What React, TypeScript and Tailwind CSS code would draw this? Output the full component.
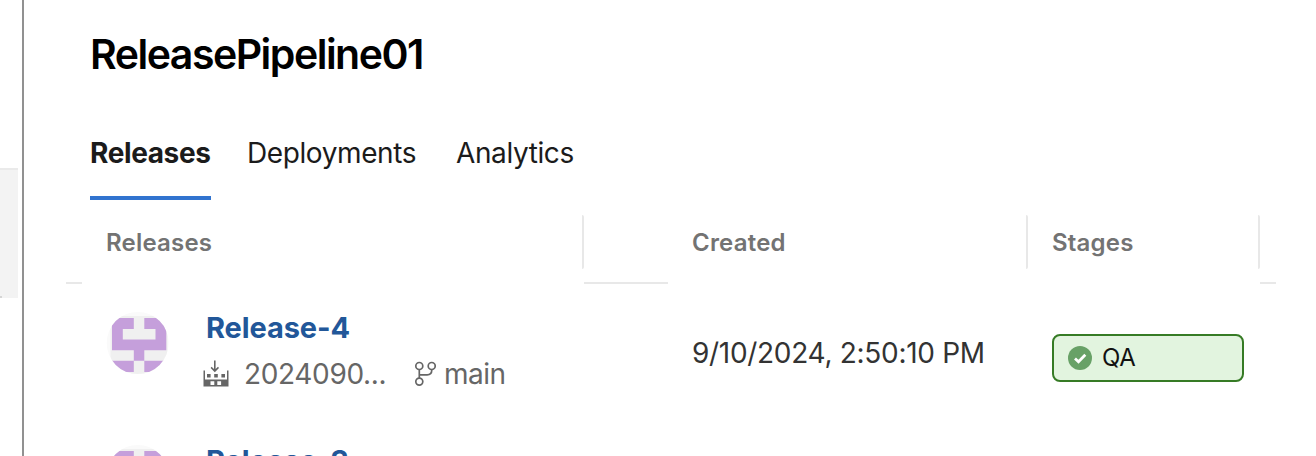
import type { ReactNode } from "react";

function Avatar() {
  return (
    <svg width="64" height="64" viewBox="0 0 64 64" className="block shrink-0">
      <defs>
        <clipPath id="avatar-clip">
          <circle cx="31.7" cy="32" r="31" />
        </clipPath>
      </defs>
      <g clipPath="url(#avatar-clip)">
        <rect width="64" height="64" fill="#fafafa" />
        <rect x="4.5" y="5" width="57" height="59" fill="#f0f0f0" />
        <path
          fill="#c59fdb"
          d="M6 7H27.8V18H16.8V28.5H49.5V18H38.3V7H60.3V39.2H38.3V49.8H27.8V39.2H6ZM6 49.8H27.8V61H6ZM38.3 49.8H60.3V61H38.3Z"
        />
      </g>
    </svg>
  );
}

function BuildIcon() {
  return (
    <svg width="26" height="28" viewBox="0 0 26 28" className="block shrink-0" fill="#666">
      <path d="M11 0.5H12.6V9L15 6.8L16 7.9L11.8 12.2L7.6 7.9L8.6 6.8L11 9Z" />
      <path
        fillRule="evenodd"
        d="M0.5 10.5H2V19.5H24V10.5H25.5V26.5H0.5ZM7.5 21.3V25H11.3V21.3ZM14.3 21.3V25H18.1V21.3Z"
      />
      <path d="M4 14H7.6V17.5H4ZM11.2 14H14.8V17.5H11.2ZM18.4 14H22V17.5H18.4Z" />
    </svg>
  );
}

function BranchIcon() {
  return (
    <svg width="22" height="26" viewBox="0 0 22 26" className="block shrink-0" fill="none" stroke="#666" strokeWidth="1.7">
      <circle cx="5.3" cy="5" r="3.5" />
      <circle cx="17.7" cy="5" r="3.5" />
      <circle cx="5.3" cy="20.6" r="3.5" />
      <path d="M5.3 8.5V17.1M17.7 8.5V9.5Q17.7 13.8 13.2 13.8H5.3" />
    </svg>
  );
}

function Row({ name, build, branch, children }: { name: string; build?: string; branch?: string; children?: ReactNode }) {
  return (
    <div className="flex h-[133px] shrink-0 items-start">
      <div className="flex w-[602px] pl-[16px]">
        <Avatar />
        <div className="ml-[36px] flex flex-col">
          <div className="h-[34px] whitespace-nowrap text-[29px] font-bold leading-[34px] tracking-[-0.1px] text-[#225799]">{name}</div>
          {build && (
            <div className="-ml-[3px] mt-[11px] flex h-[36px] items-center text-[28px] leading-[36px] text-[#666]">
              <BuildIcon />
              <span className="ml-[15px] w-[170px] whitespace-nowrap tracking-[-0.35px]">{build}</span>
              <BranchIcon />
              <span className="ml-[8px] tracking-[-0.5px]">{branch}</span>
            </div>
          )}
        </div>
      </div>
      {children}
    </div>
  );
}

export default function App() {
  return (
    <div className="flex h-[456px] w-[1316px] overflow-hidden bg-white font-['Inter','Liberation_Sans',sans-serif]">
      <aside className="w-[22px] shrink-0 pt-[168px]">
        <div className="flex h-[130px] w-[18px] items-end border-t-2 border-[#eaeaea] bg-[#f3f3f3]">
          <div className="h-[2px] w-[2px] bg-[#d5d5d5]" />
        </div>
      </aside>
      <main className="flex min-w-0 flex-1 flex-col border-l-2 border-[#919191]">
        <h1 className="ml-[66px] mt-[29px] h-[50px] shrink-0 text-[41px] font-semibold leading-[50px] tracking-[-1.5px] text-black">ReleasePipeline01</h1>
        <nav className="ml-[66px] mt-[54px] flex h-[67px] shrink-0 text-[28px] leading-[40px] text-[#1b1b1b]">
          <div className="w-[121px] whitespace-nowrap border-b-4 border-[#3173cf] font-bold tracking-[-0.38px]">Releases</div>
          <div className="ml-[36px] w-[174px] whitespace-nowrap tracking-[-0.4px]">Deployments</div>
          <div className="ml-[35px] whitespace-nowrap tracking-[-0.4px]">Analytics</div>
        </nav>
        <div className="ml-[42px] flex h-[69px] w-[1210px] shrink-0 pt-[15px] text-[24px] font-semibold leading-[56px] tracking-[0.2px] text-[#737373]">
          <div className="h-[54px] w-[518px] rounded-r-[2px] border-r-2 border-[#e8e8e8] pl-[40px]">Releases</div>
          <div className="h-[54px] w-[444px] rounded-r-[2px] border-r-2 border-[#e8e8e8] pl-[108px]">Created</div>
          <div className="h-[54px] w-[232px] rounded-r-[2px] border-r-2 border-[#e8e8e8] pl-[24px]">Stages</div>
        </div>
        <div className="ml-[42px] mt-[13px] flex h-[2px] w-[1210px] shrink-0">
          <div className="w-[16px] bg-[#e8e8e8]" />
          <div className="ml-[502px] w-[84px] bg-[#e8e8e8]" />
          <div className="ml-[592px] w-[16px] bg-[#e8e8e8]" />
        </div>
        <div className="ml-[66px] mt-[27px] flex flex-col">
          <Row name="Release-4" build="2024090..." branch="main">
            <div className="mt-[24px] w-[360px] whitespace-nowrap text-[28px] leading-[36px] tracking-[-0.3px] text-[#333]">9/10/2024, 2:50:10 PM</div>
            <div className="mt-[23px] flex h-[48px] w-[192px] items-center rounded-[8px] border-2 border-[#367b25] bg-[#e2f4df] pl-[14px]">
              <svg width="24" height="24" viewBox="0 0 24 24" className="block shrink-0">
                <circle cx="12" cy="12" r="12" fill="#68a167" />
                <path d="M7 12.5L10.5 15.7L17.3 8.8" fill="none" stroke="white" strokeWidth="2.8" />
              </svg>
              <span className="ml-[10px] text-[24px] leading-[40px] tracking-[-0.3px] text-[#111]">QA</span>
            </div>
          </Row>
          <Row name="Release-3" />
        </div>
      </main>
    </div>
  );
}
